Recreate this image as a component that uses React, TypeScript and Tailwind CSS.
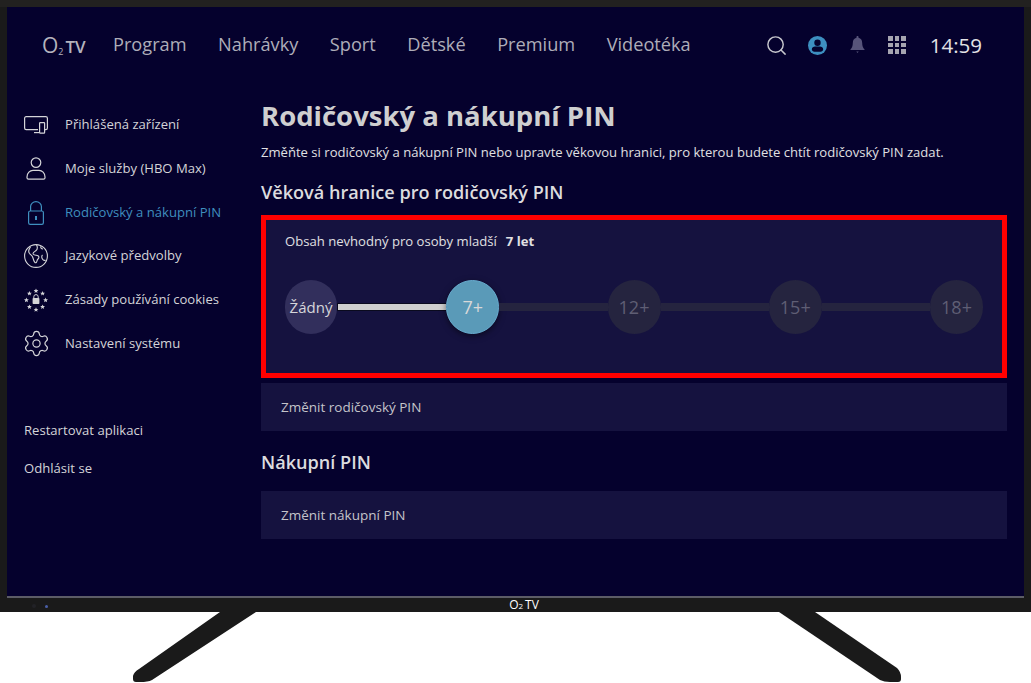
import React from "react";
import { Search, Settings } from "lucide-react";

const navItems = ["Program", "Nahrávky", "Sport", "Dětské", "Premium", "Videotéka"];
const steps = ["12+", "15+", "18+"];

const DevicesIcon = () => (
  <svg width="24" height="18" viewBox="0 0 24 18" fill="none" stroke="currentColor" strokeWidth="1.2">
    <path d="M14 13.6H2.2A1.6 1.6 0 0 1 .6 12V2.2A1.6 1.6 0 0 1 2.2.6h19.6a1.6 1.6 0 0 1 1.6 1.6V12a1.6 1.6 0 0 1-1.6 1.6h-.8" />
    <path d="M10 16.6h5" />
    <rect x="15.6" y="6.6" width="5" height="10.6" rx="0.6" />
  </svg>
);

const UserIcon = () => (
  <svg width="20" height="23" viewBox="0 0 20 23" fill="none" stroke="currentColor" strokeWidth="1.2">
    <circle cx="10" cy="5.6" r="4.8" />
    <path d="M1 20c0-4.200 3-6.600 6-6.600h6c3 0 6 2.400 6 6.600v.8a1.400 1.400 0 0 1-1.400 1.400H2.400A1.400 1.400 0 0 1 1 20.800z" />
  </svg>
);

const LockIcon = () => (
  <svg width="16" height="24" viewBox="0 0 16 24" fill="none" stroke="currentColor" strokeWidth="1.2">
    <path d="M2.600 10V5.600a5.400 5 0 0 1 10.800 0V10" />
    <rect x="0.600" y="10" width="14.800" height="13.400" rx="1.600" />
    <path d="M8 15v4" strokeWidth="2" />
  </svg>
);

const GlobeIcon = () => (
  <svg width="24" height="24" viewBox="0 0 24 24" fill="none" stroke="currentColor" strokeWidth="1.100" strokeLinejoin="round">
    <circle cx="12" cy="12" r="11.400" />
    <path d="M6.500 2.800C4.800 5 4 7.500 5.500 9.500 7 11.300 8.300 11.500 9 14c.6 2.200 1.600 5 3 4.800 1-.2.600-2.600 2-3.800 1.200-1 1.200-2.500 0-3.200-1.500-.8-3.800-.2-4.800-1.800-.8-1.400 1.200-2.200 2.600-3.200C13.300 5.700 14 3.800 12.500.7" />
    <path d="M17 2.200c-.8 1.300.4 2.800 2 2.800" />
    <path d="M18.500 11c-1.300 1.200-.8 3.400.4 4.600.8.800 1.800 1 2.700.6" />
  </svg>
);

const starPositions = [
  [12, 2.800], [18.600, 5.400], [21.600, 12], [18.600, 18.800],
  [12, 21.600], [5.400, 18.800], [2.400, 12], [5.400, 5.400],
];

const CookiesIcon = () => (
  <svg width="24" height="24" viewBox="0 0 24 24" fill="currentColor">
    {starPositions.map(([x, y], i) => (
      <polygon
        key={i}
        points={`${x},${y - 2.400} ${x + 0.7},${y - 0.7} ${x + 2.400},${y - 0.7} ${x + 1.100},${y + 0.5} ${x + 1.500},${y + 2.200} ${x},${y + 1.200} ${x - 1.500},${y + 2.200} ${x - 1.100},${y + 0.5} ${x - 2.400},${y - 0.7} ${x - 0.7},${y - 0.7}`}
      />
    ))}
    <path d="M9.800 10V8.800a2.200 2.200 0 0 1 4.400 0V10" fill="none" stroke="currentColor" strokeWidth="1" />
    <rect x="8.600" y="10" width="6.800" height="6" rx="0.800" />
  </svg>
);

const AccountIcon = () => (
  <svg width="19" height="19" viewBox="0 0 19 19">
    <circle cx="9.500" cy="9.500" r="9.500" fill="#3d8fc0" />
    <circle cx="9.500" cy="6.800" r="3.200" fill="#05012d" />
    <path d="M3.800 13.200c0-1.800 1.800-2.700 3.200-2.700h5c1.400 0 3.200.9 3.200 2.700 0 1.500-1.300 2.500-2.600 2.500H6.400c-1.300 0-2.600-1-2.600-2.500z" fill="#05012d" />
  </svg>
);

const BellIcon = () => (
  <svg width="15" height="18" viewBox="0 0 15 18" fill="#57547a">
    <path d="M7.500 0c.6 0 1 .4 1 1v.8c2.500.5 3.700 2.600 3.700 5.200 0 3 .8 5 2.300 6.200v.8H.5v-.8C2 12 2.800 10 2.800 7c0-2.600 1.200-4.700 3.700-5.200V1c0-.6.4-1 1-1z" />
    <path d="M6.300 15.500h2.400L7.500 17z" />
  </svg>
);

const GridIcon = () => (
  <div className="grid grid-cols-3 gap-[2px]">
    {Array.from({ length: 9 }).map((_, i) => (
      <div key={i} className="w-[4.500px] h-[4.500px] bg-[#a6a5b0]" />
    ))}
  </div>
);

const Logo = ({ big }: { big?: boolean }) =>
  big ? (
    <div className="flex items-baseline text-[#b4b3bd] w-[45px]">
      <span className="text-[21px] leading-none">O</span>
      <span className="text-[9px] leading-none translate-y-[2px] mr-[2px]">2</span>
      <span className="text-[17px] leading-none font-semibold">TV</span>
    </div>
  ) : (
    <div className="flex items-baseline text-white">
      <span className="text-[12px] leading-none">O</span>
      <span className="text-[8px] leading-none">2</span>
      <span className="text-[12px] leading-none ml-[2px]">TV</span>
    </div>
  );

const SideItem = ({ icon, label, active }: { icon: React.ReactNode; label: string; active?: boolean }) => (
  <div className={`h-[43.700px] flex items-center ${active ? "text-[#3f8fbf]" : "text-[#d4d4d8]"}`}>
    <div className="w-[24px] flex justify-center mr-[17px]">{icon}</div>
    <span className="text-[13.100px]">{label}</span>
  </div>
);

const Track = ({ filled }: { filled?: boolean }) => (
  <div className={`flex-1 h-[8px] ${filled ? "bg-[#cfcfcf] border border-[#0a0a1e] border-r-0" : "bg-[#25243f]"}`} />
);

export default function App() {
  return (
    <div className="w-[1031px] h-[683px] bg-white overflow-hidden" style={{ fontFamily: '"Open Sans", sans-serif' }}>
      {/* tv body */}
      <div className="h-[612px] bg-[#1a1a1a] border-t-[7px] border-t-[#222120] px-[7px] flex flex-col">
        <div className="h-[591px] bg-[#05012d] border-b-[2px] border-b-[#5c5c66] flex flex-col">
          <header className="h-[76px] flex items-center pl-[35px] pr-[42px]">
            <Logo big />
            <nav className="flex items-center gap-[31.500px] ml-[26px] text-[18.200px] text-[#aeadb9]">
              {navItems.map((item) => (
                <span key={item}>{item}</span>
              ))}
            </nav>
            <div className="ml-auto flex items-center">
              <Search size={23} strokeWidth={1.500} className="text-[#c8c8ce]" />
              <div className="ml-[20px]"><AccountIcon /></div>
              <div className="ml-[23px]"><BellIcon /></div>
              <div className="ml-[23px]"><GridIcon /></div>
              <span className="ml-[24px] text-[20.500px] text-[#e3e3e6]">14:59</span>
            </div>
          </header>

          <div className="flex flex-1">
            <aside className="w-[254px] pl-[17px] pt-[20.400px]">
              <SideItem icon={<DevicesIcon />} label="Přihlášená zařízení" />
              <SideItem icon={<UserIcon />} label="Moje služby (HBO Max)" />
              <SideItem icon={<LockIcon />} label="Rodičovský a nákupní PIN" active />
              <SideItem icon={<GlobeIcon />} label="Jazykové předvolby" />
              <SideItem icon={<CookiesIcon />} label="Zásady používání cookies" />
              <SideItem icon={<Settings size={29} strokeWidth={1} className="shrink-0" />} label="Nastavení systému" />
              <div className="mt-[55.600px] flex flex-col gap-[20px] text-[13.100px] text-[#d4d4d8]">
                <span className="leading-[18px]">Restartovat aplikaci</span>
                <span className="leading-[18px]">Odhlásit se</span>
              </div>
            </aside>

            <main className="w-[746px] pt-[14px]">
              <h1 className="text-[27.500px] leading-[38px] font-bold text-[#cfcfd0]">Rodičovský a nákupní PIN</h1>
              <p className="text-[13.080px] leading-[18px] text-[#e0e0e3] mt-[8px]">
                Změňte si rodičovský a nákupní PIN nebo upravte věkovou hranici, pro kterou budete chtít rodičovský PIN zadat.
              </p>
              <h2 className="text-[18.100px] leading-[24px] font-semibold text-[#dcdcdf] mt-[19px]">Věková hranice pro rodičovský PIN</h2>

              <section className="mt-[11px] h-[163px] border-[5px] border-[#ff0000] bg-[#15123f] px-[19px] pt-[12px]">
                <div className="text-[13.100px] leading-[18px] text-[#e0e0e3]">
                  Obsah nevhodný pro osoby mladší<span className="font-bold ml-[9px]">7 let</span>
                </div>
                <div className="flex items-center mt-[30px]">
                  <div className="w-[52px] h-[54px] rounded-full bg-[#322f5c] flex items-center justify-center text-[15px] text-[#d6d6da]">Žádný</div>
                  <Track filled />
                  <div className="w-[53px] h-[54px] rounded-full bg-[#5a9ab8] border border-[#68add0] shadow-[0_2px_6px_rgba(0,0,0,0.5)] flex items-center justify-center text-[18px] text-[#d8d8d8]">7+</div>
                  {steps.map((step) => (
                    <React.Fragment key={step}>
                      <Track />
                      <div className="w-[53px] h-[54px] rounded-full bg-[#25243f] flex items-center justify-center text-[18px] text-[#5f5e74]">{step}</div>
                    </React.Fragment>
                  ))}
                </div>
              </section>

              <div className="mt-[5px] h-[48px] bg-[#15123f] flex items-center pl-[20px] text-[13.500px] text-[#c4c4ca]">Změnit rodičovský PIN</div>
              <h2 className="text-[18.100px] leading-[24px] font-semibold text-[#dcdcdf] mt-[19px]">Nákupní PIN</h2>
              <div className="mt-[17px] h-[48px] bg-[#15123f] flex items-center pl-[20px] text-[13.500px] text-[#c4c4ca]">Změnit nákupní PIN</div>
            </main>
          </div>
        </div>

        {/* lower bezel */}
        <div className="flex-1 relative flex items-center justify-center pl-[17px]">
          <div className="absolute left-[25px] top-[6px] flex items-center gap-[9px]">
            <div className="w-[4px] h-[4px] rounded-full bg-[#222226]" />
            <div className="w-[3px] h-[3px] rounded-full bg-[#4a5fa8]" />
          </div>
          <Logo />
        </div>
      </div>

      {/* stand legs */}
      <svg width="1031" height="71" viewBox="0 0 1031 71" className="block" fill="#1a1a1a">
        <path d="M220 0H256L152 68Q148 70 140 70H136Q133 70 133 67V64Q134 60 139 57Z" />
        <path d="M779 0H815L897 56Q901 60 901 65V67Q901 70 898 70H890Q884 70 880 68Z" />
      </svg>
    </div>
  );
}
